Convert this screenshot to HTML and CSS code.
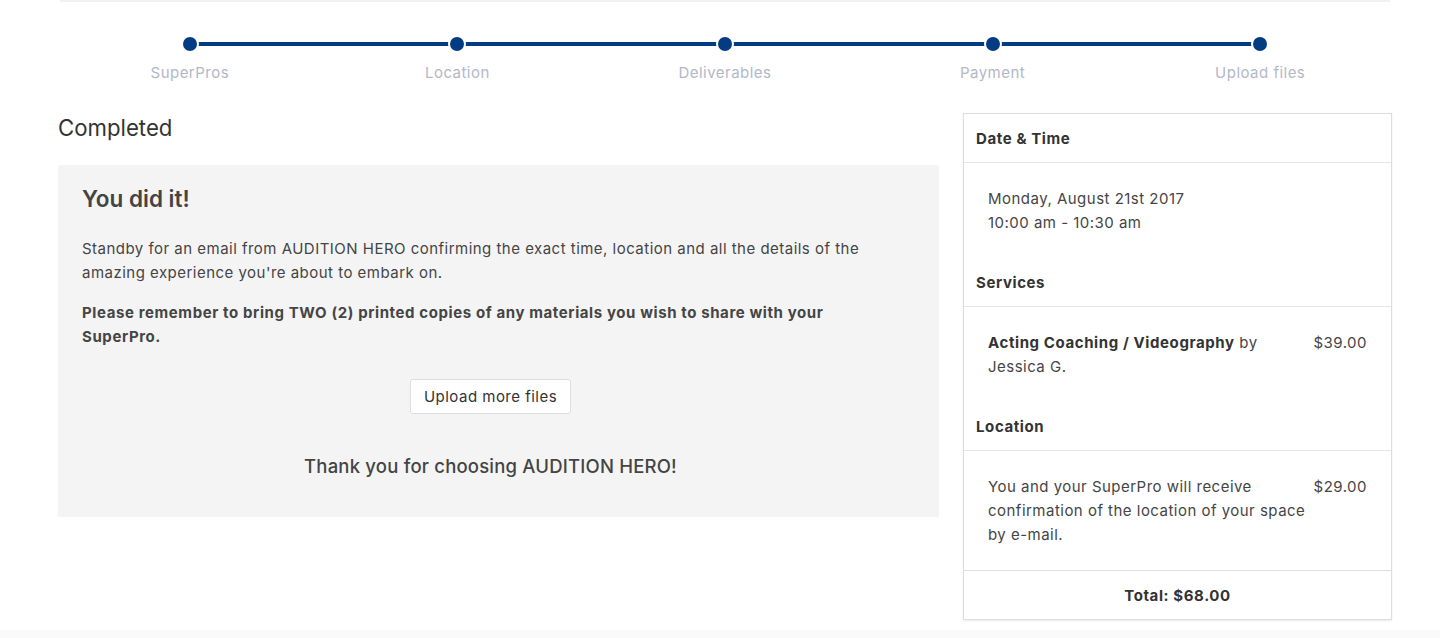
FILE: index.html
```html
<!DOCTYPE html>
<html lang="en">
<head>
<meta charset="utf-8">
<title>Completed</title>
<link rel="stylesheet" href="styles.css">
</head>
<body>
<div class="top-edge"></div>

<ol class="stepper">
  <li class="step"><span class="dot"></span><span class="label">SuperPros</span></li>
  <li class="step"><span class="dot"></span><span class="label">Location</span></li>
  <li class="step"><span class="dot"></span><span class="label">Deliverables</span></li>
  <li class="step"><span class="dot"></span><span class="label">Payment</span></li>
  <li class="step"><span class="dot"></span><span class="label">Upload files</span></li>
</ol>

<main class="content">
  <section class="main-col">
    <h2 class="page-title">Completed</h2>
    <div class="done-box">
      <h3 class="done-title">You did it!</h3>
      <p class="done-text">Standby for an email from AUDITION HERO confirming the exact time, location and all the details of the amazing experience you're about to embark on.</p>
      <p class="done-text strong">Please remember to bring TWO (2) printed copies of any materials you wish to share with your SuperPro.</p>
      <div class="btn-row"><button class="btn" type="button">Upload more files</button></div>
      <p class="thanks">Thank you for choosing AUDITION HERO!</p>
    </div>
  </section>

  <aside class="summary">
    <div class="sum-head">Date &amp; Time</div>
    <div class="sum-body">
      <div class="sum-desc">Monday, August 21st 2017<br>10:00 am - 10:30 am</div>
    </div>
    <div class="sum-head">Services</div>
    <div class="sum-body row">
      <div class="sum-desc"><b>Acting Coaching / Videography</b> by Jessica G.</div>
      <div class="price">$39.00</div>
    </div>
    <div class="sum-head">Location</div>
    <div class="sum-body row">
      <div class="sum-desc">You and your SuperPro will receive confirmation of the location of your space by e-mail.</div>
      <div class="price">$29.00</div>
    </div>
    <div class="sum-total">Total: $68.00</div>
  </aside>
</main>

<footer class="foot"></footer>
</body>
</html>
```

FILE: styles.css
```css
* { box-sizing: border-box; }

html, body {
  margin: 0;
  padding: 0;
  background: #ffffff;
}

body {
  font-family: Inter, "Noto Sans", "Liberation Sans", sans-serif;
  font-size: 15px;
  line-height: 24px;
  letter-spacing: 0.48px;
  color: #454545;
  overflow: hidden;
  height: 638px;
}

.top-edge {
  height: 2px;
  margin: 0 50px 0 60px;
  background: #f1f1f1;
}

.stepper {
  list-style: none;
  margin: 35px 0 0 56px;
  padding: 0;
  width: 1338px;
  display: flex;
}

.step {
  flex: 1 1 0;
  display: flex;
  flex-direction: column;
  align-items: center;
  position: relative;
}

.step + .step::before {
  content: "";
  position: absolute;
  top: 5px;
  left: -50%;
  right: 50%;
  height: 4px;
  background: #033c82;
}

.dot {
  position: relative;
  z-index: 1;
  width: 14px;
  height: 14px;
  border-radius: 50%;
  background: #033c82;
  box-shadow: 0 0 0 2px #ffffff;
}

.label {
  margin-top: 12px;
  line-height: 20px;
  font-size: 15px;
  color: #b3b8c6;
}

.content {
  margin: 30px 0 0 58px;
  width: 1334px;
  display: flex;
  gap: 24px;
  align-items: flex-start;
}

.main-col {
  width: 881px;
}

.page-title {
  margin: 0 0 22px;
  font-size: 22.2px;
  line-height: 30px;
  font-weight: 400;
  letter-spacing: 0;
  color: #333333;
}

.done-box {
  background: #f4f4f4;
  border-radius: 2px;
  padding: 20px 40px 39px 24px;
}

.done-title {
  margin: 0 0 24px;
  font-size: 22.5px;
  line-height: 28px;
  font-weight: 600;
  letter-spacing: 0;
  color: #444444;
}

.done-text {
  margin: 0 0 16px;
}

.done-text.strong {
  font-weight: 700;
  letter-spacing: 0.6px;
  margin-bottom: 30px;
}

.btn-row {
  display: flex;
  justify-content: center;
}

.btn {
  font-family: inherit;
  font-size: 15px;
  line-height: 23px;
  letter-spacing: 0.48px;
  color: #333333;
  background: #ffffff;
  border: 1px solid #dddddd;
  border-radius: 3px;
  padding: 5px 13px;
  height: 35px;
}

.thanks {
  margin: 40px 0 0;
  text-align: center;
  font-size: 18.5px;
  font-weight: 500;
  letter-spacing: 0.2px;
  color: #444444;
}

.summary {
  width: 429px;
  border: 1px solid #dddddd;
  background: #ffffff;
  box-shadow: 0 1px 2px rgba(0, 0, 0, 0.08);
}

.sum-head {
  padding: 13px 12px 11px;
  font-weight: 700;
  letter-spacing: 0.6px;
  color: #333333;
  border-bottom: 1px solid #e6e6e6;
}

.sum-body {
  padding: 24px 24px 23px 24px;
}

.sum-body.row {
  display: flex;
  justify-content: space-between;
  gap: 8px;
}

.sum-desc b {
  font-weight: 700;
  letter-spacing: 0.6px;
  color: #333333;
}

.price {
  flex: 0 0 auto;
}

.sum-total {
  border-top: 1px solid #dddddd;
  padding: 13px 12px 11px;
  text-align: center;
  font-weight: 700;
  letter-spacing: 0.6px;
  color: #333333;
}

.foot {
  margin-top: 10px;
  height: 9px;
  background: #fafafa;
}
```
